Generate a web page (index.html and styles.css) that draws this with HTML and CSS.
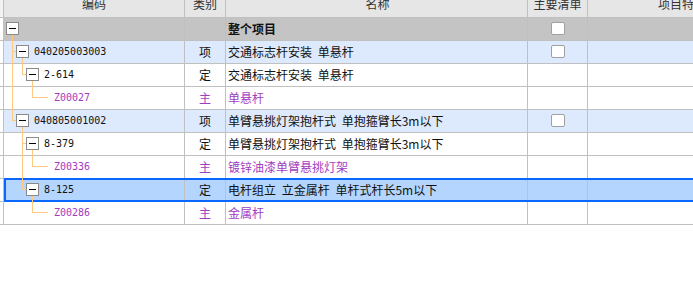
FILE: index.html
```html
<!DOCTYPE html>
<html>
<head>
<meta charset="utf-8">
<link rel="stylesheet" href="styles.css">
</head>
<body>
<div class="grid">
  <div class="row head">
    <div class="c lead"></div>
    <div class="c code hc"><span>编码</span></div>
    <div class="c type hc"><span>类别</span></div>
    <div class="c name hc"><span>名称</span></div>
    <div class="c main hc"><span>主要清单</span></div>
    <div class="c feat hc"><span>项目特征</span></div>
  </div>
  <div class="body">
    <svg class="tree" width="60" height="230" viewBox="0 0 60 230" shape-rendering="crispEdges">
      <g stroke="#ffc97f" stroke-width="1" fill="none">
        <path d="M12.5 17 V102.5 M12 33.5 H16 M12 102.5 H16"/>
        <path d="M22.5 40 V56.5 M22 56.5 H26"/>
        <path d="M32.5 63 V79.5 M32 79.5 H48"/>
        <path d="M22.5 109 V171.5 M22 125.5 H26 M22 171.5 H26"/>
        <path d="M32.5 132 V148.5 M32 148.5 H48"/>
        <path d="M32.5 178 V194.5 M32 194.5 H48"/>
      </g>
    </svg>

    <div class="row gray">
      <div class="c lead"></div>
      <div class="c code l0"><i class="box"></i></div>
      <div class="c type"></div>
      <div class="c name bold">整个项目</div>
      <div class="c main"><i class="chk"></i></div>
      <div class="c feat"></div>
    </div>

    <div class="row blue">
      <div class="c lead"></div>
      <div class="c code l1"><i class="box"></i><span class="num">040205003003</span></div>
      <div class="c type">项</div>
      <div class="c name">交通标志杆安装 单悬杆</div>
      <div class="c main"><i class="chk"></i></div>
      <div class="c feat"></div>
    </div>

    <div class="row">
      <div class="c lead"></div>
      <div class="c code l2"><i class="box"></i><span class="num">2-614</span></div>
      <div class="c type">定</div>
      <div class="c name">交通标志杆安装 单悬杆</div>
      <div class="c main"></div>
      <div class="c feat"></div>
    </div>

    <div class="row purple">
      <div class="c lead"></div>
      <div class="c code l3"><span class="num">Z00027</span></div>
      <div class="c type">主</div>
      <div class="c name">单悬杆</div>
      <div class="c main"></div>
      <div class="c feat"></div>
    </div>

    <div class="row blue">
      <div class="c lead"></div>
      <div class="c code l1"><i class="box"></i><span class="num">040805001002</span></div>
      <div class="c type">项</div>
      <div class="c name">单臂悬挑灯架抱杆式 单抱箍臂长3m以下</div>
      <div class="c main"><i class="chk"></i></div>
      <div class="c feat"></div>
    </div>

    <div class="row">
      <div class="c lead"></div>
      <div class="c code l2"><i class="box"></i><span class="num">8-379</span></div>
      <div class="c type">定</div>
      <div class="c name">单臂悬挑灯架抱杆式 单抱箍臂长3m以下</div>
      <div class="c main"></div>
      <div class="c feat"></div>
    </div>

    <div class="row purple">
      <div class="c lead"></div>
      <div class="c code l3"><span class="num">Z00336</span></div>
      <div class="c type">主</div>
      <div class="c name">镀锌油漆单臂悬挑灯架</div>
      <div class="c main"></div>
      <div class="c feat"></div>
    </div>

    <div class="row sel">
      <div class="c lead"></div>
      <div class="c code l2"><i class="box"></i><span class="num">8-125</span></div>
      <div class="c type">定</div>
      <div class="c name">电杆组立 立金属杆 单杆式杆长5m以下</div>
      <div class="c main"></div>
      <div class="c feat"></div>
    </div>

    <div class="row purple">
      <div class="c lead"></div>
      <div class="c code l3"><span class="num">Z00286</span></div>
      <div class="c type">主</div>
      <div class="c name">金属杆</div>
      <div class="c main"></div>
      <div class="c feat"></div>
    </div>
  </div>
</div>
</body>
</html>
```

FILE: styles.css
```css
html, body {
  margin: 0;
  padding: 0;
  overflow: hidden;
  background: #fff;
}
body {
  width: 693px;
  height: 293px;
  font-family: "Noto Sans CJK SC", sans-serif;
  font-size: 12px;
  color: #111;
}
.grid {
  width: 776px;
}
.body {
  position: relative;
}
.row {
  display: grid;
  grid-template-columns: 4px 181px 41px 302px 60px 188px;
  height: 23px;
  position: relative;
}
.c {
  box-sizing: border-box;
  border-right: 1px solid #c0c0c0;
  border-bottom: 1px solid #c0c0c0;
  display: flex;
  align-items: center;
  white-space: pre;
  overflow: hidden;
  line-height: 22px;
}
.c.feat {
  border-right: none;
}
.c.lead {
  background: #fff;
}
.head {
  height: 18px;
}
.head .c {
  background: #e6e6e6;
  color: #333;
}
.head .c.lead {
  background: #f2f2f2;
}
.hc {
  justify-content: center;
  align-items: flex-start;
}
.hc span {
  display: block;
  line-height: 12px;
  margin-top: -2px;
}
.type {
  justify-content: center;
}
.main {
  justify-content: center;
}
.name {
  padding-left: 2px;
  word-spacing: 3px;
}
.bold {
  font-weight: bold;
}
.gray .c:not(.lead) {
  background: #c4c4c4;
}
.blue .c:not(.lead) {
  background: #dde9fd;
}
.sel .c:not(.lead) {
  background: #b4d5fe;
}
.sel::after {
  content: "";
  position: absolute;
  left: 4px;
  right: 0;
  top: -1px;
  height: 24px;
  box-sizing: border-box;
  border: 2px solid #0a66ff;
  pointer-events: none;
}
.purple .type,
.purple .name,
.purple .num {
  color: #a23cc0;
}
.l0 { padding-left: 2px; }
.l1 { padding-left: 12px; }
.l2 { padding-left: 22px; }
.l3 { padding-left: 50px; }
.box {
  display: block;
  flex: none;
  box-sizing: border-box;
  width: 13px;
  height: 13px;
  border: 1px solid #8a8a8a;
  background: #fff;
  position: relative;
  margin-top: -1px;
  margin-right: 5px;
}
.box::after {
  content: "";
  position: absolute;
  left: 2px;
  top: 5px;
  width: 7px;
  height: 1px;
  background: #000;
}
.num {
  font-family: "DejaVu Sans Mono", monospace;
  font-size: 10px;
}
.chk {
  display: block;
  box-sizing: border-box;
  width: 14px;
  height: 13px;
  border: 1px solid #a0a0a0;
  border-radius: 2px;
  background: #fff;
  margin-top: -1px;
}
.tree {
  position: absolute;
  left: 0;
  top: 0;
  z-index: 2;
  pointer-events: none;
}
```
